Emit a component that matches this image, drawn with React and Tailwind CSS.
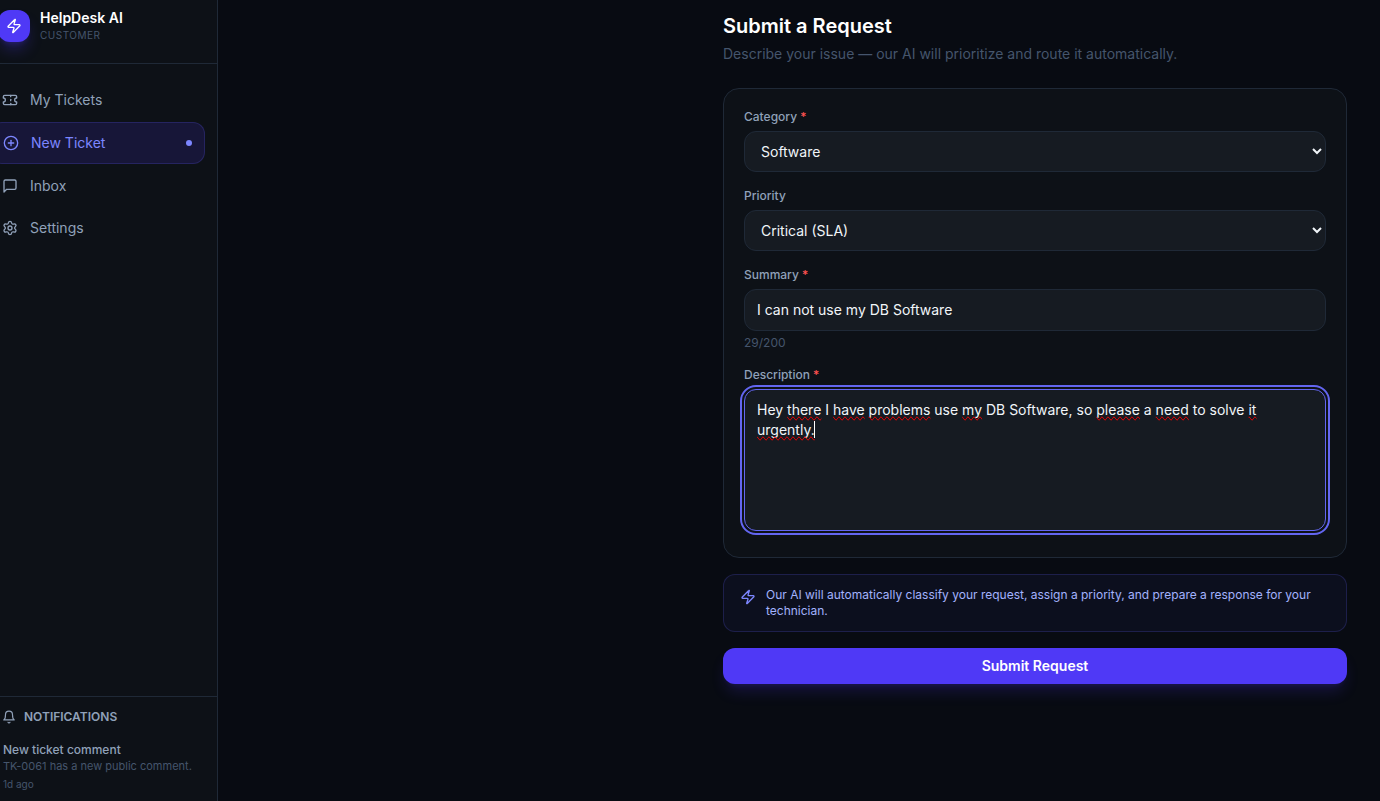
import { useState } from 'react';
import { CirclePlus, Settings, Ticket, Zap } from 'lucide-react';

const MessageIcon = ({ size = 16 }) => (
  <svg
    width={size}
    height={size}
    viewBox="0 0 24 24"
    fill="none"
    stroke="currentColor"
    strokeWidth="2"
    strokeLinecap="round"
    strokeLinejoin="round"
    aria-hidden="true"
  >
    <path d="M21 15a2 2 0 0 1-2 2H7l-4 4V5a2 2 0 0 1 2-2h14a2 2 0 0 1 2 2z" />
  </svg>
);

const BellIcon = ({ size = 14 }) => (
  <svg
    width={size}
    height={size}
    viewBox="0 0 24 24"
    fill="none"
    stroke="currentColor"
    strokeWidth="2"
    strokeLinecap="round"
    strokeLinejoin="round"
    aria-hidden="true"
  >
    <path d="M6 8a6 6 0 0 1 12 0c0 7 3 9 3 9H3s3-2 3-9" />
    <path d="M10.3 21a1.94 1.94 0 0 0 3.4 0" />
  </svg>
);

const NAV_ITEMS = [
  { label: 'My Tickets', icon: Ticket },
  { label: 'New Ticket', icon: CirclePlus, active: true },
  { label: 'Inbox', icon: MessageIcon },
  { label: 'Settings', icon: Settings },
];

const MISSPELLED = ['there', 'have', 'problems', 'my', 'please', 'need', 'it', 'urgently.'];

const fieldClass =
  'block w-full rounded-xl border border-[#1f2937] bg-[#161b22] px-3 text-sm text-slate-100 outline-none';

const NavItem = ({ label, icon: Icon, active }) => (
  <a
    href="#"
    aria-current={active ? 'page' : undefined}
    className={
      active
        ? 'flex items-center gap-3 rounded-xl border border-indigo-500/20 bg-indigo-600/15 px-3 py-2.5 text-sm text-indigo-400'
        : 'flex items-center gap-3 rounded-xl px-3 py-2.5 text-sm text-slate-400 hover:bg-slate-800/50'
    }
  >
    <Icon size={16} />
    <span className="flex-1">{label}</span>
    {active && <span className="h-1.5 w-1.5 rounded-full bg-indigo-400" />}
  </a>
);

const Sidebar = () => (
  <aside className="-ml-[22px] flex w-60 shrink-0 flex-col border-r border-[#1f2937] bg-[#0d1117]">
    <div className="flex items-center gap-2.5 border-b border-[#1f2937] px-5 pt-2 pb-5">
      <div className="flex h-8 w-8 items-center justify-center rounded-xl bg-indigo-600 text-white shadow-lg shadow-indigo-600/30">
        <Zap size={16} />
      </div>
      <div>
        <p className="text-sm font-semibold text-white">HelpDesk AI</p>
        <p className="text-[10px] leading-[15px] tracking-wider text-slate-600 uppercase">Customer</p>
      </div>
    </div>

    <nav className="flex flex-1 flex-col gap-0.5 px-3 pt-4">
      {NAV_ITEMS.map((item) => (
        <NavItem key={item.label} {...item} />
      ))}
    </nav>

    <section className="border-t border-[#1f2937] px-6 pt-3 pb-[9px]">
      <h2 className="flex items-center gap-2 text-xs font-semibold text-slate-400 uppercase">
        <BellIcon size={14} />
        Notifications
      </h2>
      <div className="mt-[17px] pl-px">
        <p className="text-xs font-medium text-slate-400">New ticket comment</p>
        <p className="text-[11px] leading-4 whitespace-nowrap text-slate-600">TK-0061 has a new public comment.</p>
        <p className="mt-0.5 text-[10px] leading-4 text-slate-600">1d ago</p>
      </div>
    </section>
  </aside>
);

const Label = ({ htmlFor, required, children }) => (
  <label htmlFor={htmlFor} className="mb-1.5 block text-xs font-medium text-slate-400">
    {children}
    {required && <span className="text-[#ff5252]"> *</span>}
  </label>
);

// Lies over the textarea with the same metrics and draws the spelling marks and the caret
const SpellingMarks = ({ text }) => (
  <div
    aria-hidden="true"
    className="pointer-events-none absolute inset-0 border border-transparent px-3 py-2.5 text-sm whitespace-pre-wrap text-transparent"
  >
    {text.split(' ').map((word, i) => (
      <span key={i}>
        {i > 0 && ' '}
        <span className={MISSPELLED.includes(word) ? '[text-decoration-line:spelling-error]' : ''}>{word}</span>
      </span>
    ))}
    <span className="-ml-px inline-block h-[17px] w-px bg-white align-text-bottom" />
  </div>
);

const RequestForm = () => {
  const [category, setCategory] = useState('Software');
  const [priority, setPriority] = useState('Critical (SLA)');
  const [summary, setSummary] = useState('I can not use my DB Software');
  const [description, setDescription] = useState(
    'Hey there I have problems use my DB Software, so please a need to solve it urgently.'
  );

  return (
    <form className="mt-6" onSubmit={(e) => e.preventDefault()}>
      <div className="flex flex-col gap-4 rounded-2xl border border-[#1f2937] bg-[#0d1117] px-5 pt-5 pb-[26px]">
        <div>
          <Label htmlFor="category" required>Category</Label>
          <select
            id="category"
            value={category}
            onChange={(e) => setCategory(e.target.value)}
            className={`${fieldClass} h-[41px]`}
          >
            <option>Software</option>
            <option>Hardware</option>
            <option>Network</option>
          </select>
        </div>

        <div>
          <Label htmlFor="priority">Priority</Label>
          <select
            id="priority"
            value={priority}
            onChange={(e) => setPriority(e.target.value)}
            className={`${fieldClass} h-[41px]`}
          >
            <option>Low</option>
            <option>Medium</option>
            <option>High</option>
            <option>Critical (SLA)</option>
          </select>
        </div>

        <div>
          <Label htmlFor="summary" required>Summary</Label>
          <input
            id="summary"
            type="text"
            maxLength={200}
            value={summary}
            onChange={(e) => setSummary(e.target.value)}
            className={`${fieldClass} py-2.5`}
          />
          <p className="mt-1 text-xs text-slate-600">29/200</p>
        </div>

        <div>
          <Label htmlFor="description" required>Description</Label>
          <div className="relative">
            <textarea
              id="description"
              rows={6}
              spellCheck={false}
              value={description}
              onChange={(e) => setDescription(e.target.value)}
              className="block w-full resize-none rounded-xl border border-[#6366f1] bg-[#161b22] px-3 py-2.5 text-sm text-slate-100 outline-2 outline-offset-2 outline-[#6366f1]"
            />
            <SpellingMarks text={description} />
          </div>
        </div>
      </div>

      <div className="mt-4 flex items-start gap-2.5 rounded-xl border border-indigo-500/20 bg-indigo-500/5 px-4 py-3">
        <Zap size={16} className="mt-0.5 shrink-0 text-indigo-400" />
        <p className="text-xs text-indigo-300">
          Our AI will automatically classify your request, assign a priority, and prepare a response for your
          technician.
        </p>
      </div>

      <button
        type="submit"
        className="mt-4 w-full rounded-xl bg-indigo-600 py-2 text-sm font-semibold text-white shadow-lg shadow-indigo-600/20 hover:bg-indigo-500"
      >
        Submit Request
      </button>
    </form>
  );
};

const App = () => {
  return (
    <div className="flex min-h-screen overflow-hidden bg-[#080b12] font-['Inter',sans-serif]">
      <Sidebar />
      <main className="flex flex-1 justify-end pt-3 pr-[33px] pl-8">
        <div className="w-full max-w-[624px]">
          <h1 className="text-xl font-semibold text-white">Submit a Request</h1>
          <p className="mt-1 text-sm text-slate-600">
            Describe your issue — our AI will prioritize and route it automatically.
          </p>
          <RequestForm />
        </div>
      </main>
    </div>
  );
};

export default App;
